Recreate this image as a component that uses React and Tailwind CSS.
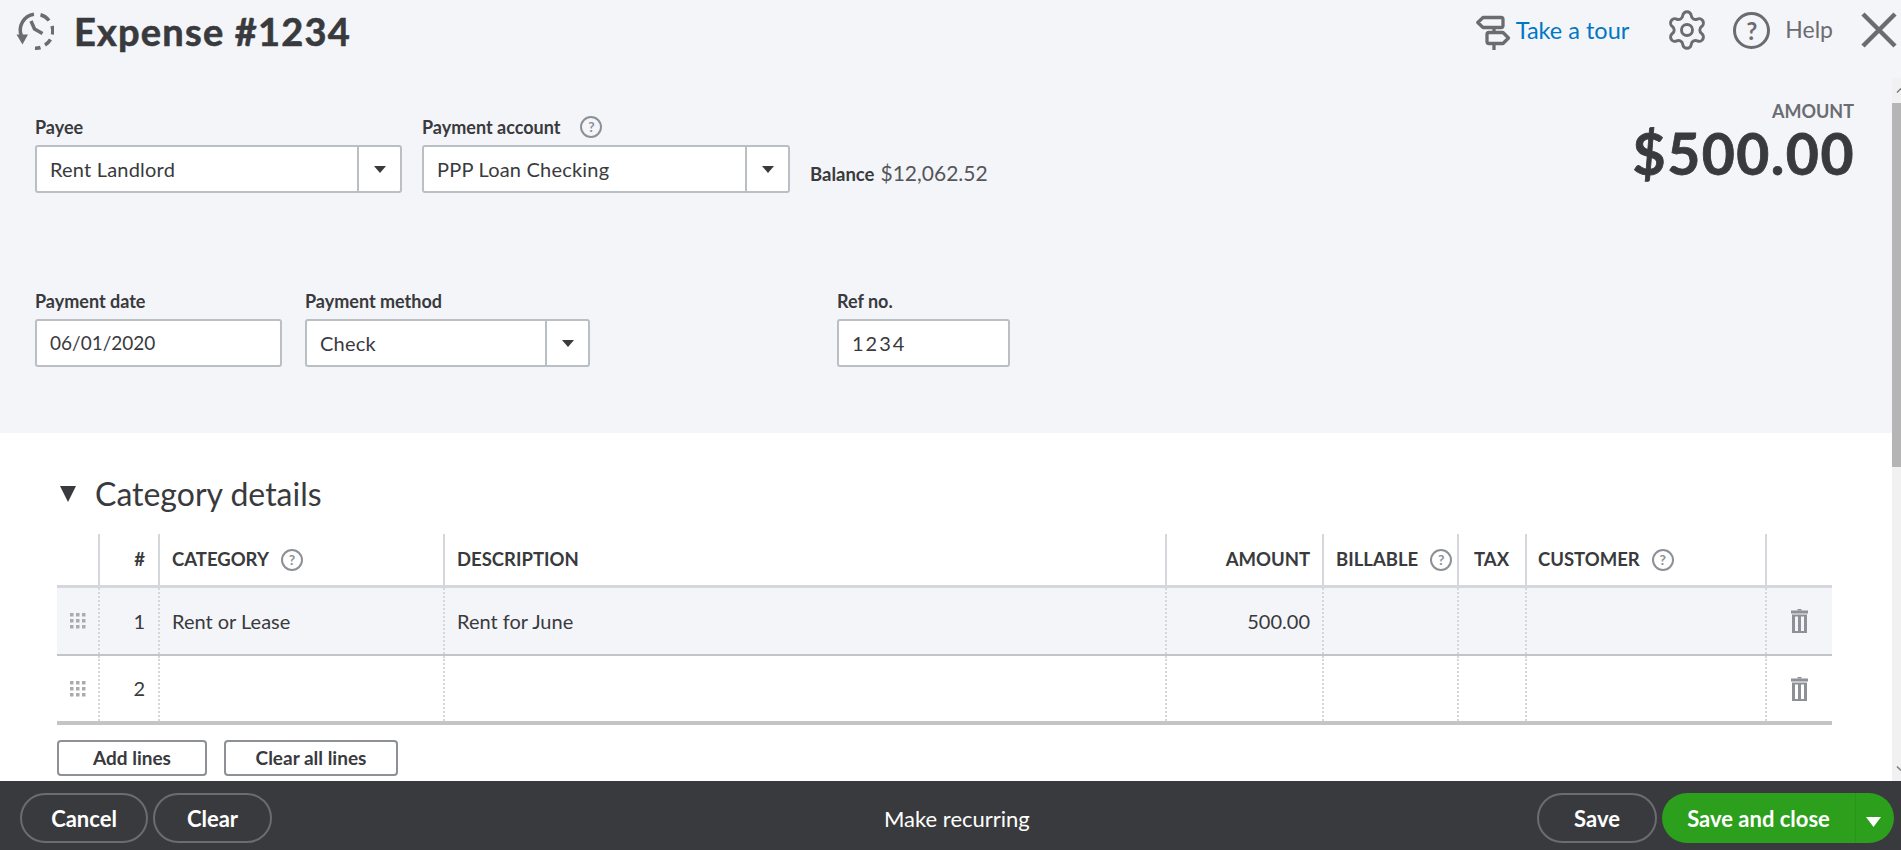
import { Settings } from 'lucide-react';

const columns = [
  { width: 'w-[43px]', border: true },
  { width: 'w-[60px]', border: true },
  { width: 'w-[285px]', border: true },
  { width: 'w-[722px]', border: true },
  { width: 'w-[157px]', border: true },
  { width: 'w-[135px]', border: true },
  { width: 'w-[68px]', border: true },
  { width: 'w-[240px]', border: true },
  { width: 'flex-1', border: false },
];

function Caret({ className = '' }) {
  return (
    <svg width="12" height="7" viewBox="0 0 12 7" className={className}>
      <path d="M0 0h12L6 7z" fill="currentColor" />
    </svg>
  );
}

function HistoryIcon() {
  return (
    <svg width="38" height="38" viewBox="0 0 38 38" fill="none" stroke="#6b6c72" strokeWidth="3.500">
      <path d="M5.500 24A15.800 15.800 0 0 1 18 2.300" />
      <path d="M24.500 2.800A16 16 0 0 1 33 8.500" />
      <path d="M36 14A17 17 0 0 1 36.500 22.500" />
      <path d="M34.500 27.500A17 17 0 0 1 29 33" />
      <path d="M24.500 35.500A17 17 0 0 1 19 36.300" />
      <path d="M15 9l3.500 8 8 4.500" strokeLinejoin="round" />
      <path d="M0.500 22.500h11.500L6.500 32.500z" fill="#6b6c72" stroke="none" />
    </svg>
  );
}

function TourIcon() {
  return (
    <svg width="35" height="36" viewBox="0 0 35 36" fill="none" stroke="#6b6c72" strokeWidth="3.300" strokeLinejoin="round">
      <path d="M7 2.500h18a2 2 0 0 1 2 2v6a2 2 0 0 1-2 2H7L1.800 7.500z" />
      <path d="M13 17.500h14l5.500 5.500-5.500 5.500H13a2 2 0 0 1-2-2v-7a2 2 0 0 1 2-2z" />
      <path d="M18 12.500v5M18 28.500v6.500" />
    </svg>
  );
}

function CloseIcon() {
  return (
    <svg width="36" height="36" viewBox="0 0 36 36" stroke="#6b6c72" strokeWidth="4.500">
      <path d="M2 2l32 32M34 2L2 34" />
    </svg>
  );
}

function HelpIcon({ big = false }) {
  return big ? (
    <span className="flex h-[37px] w-[37px] items-center justify-center rounded-full border-[3px] border-[#6b6c72] text-[24px] font-bold text-[#6b6c72]">
      ?
    </span>
  ) : (
    <span className="flex h-[22px] w-[22px] items-center justify-center rounded-full border-2 border-[#8d9096] text-[14px] font-bold text-[#8d9096]">
      ?
    </span>
  );
}

function DragDots() {
  const dots = [];
  for (let y = 1; y < 15; y += 6) {
    for (let x = 1; x < 15; x += 6) {
      dots.push(<rect key={x + '-' + y} x={x} y={y} width="3.500" height="3.500" fill="#a9abaf" />);
    }
  }
  return (
    <svg width="18" height="18" viewBox="0 0 18 18">
      {dots}
    </svg>
  );
}

function TrashIcon() {
  return (
    <svg width="17" height="24" viewBox="0 0 17 24" fill="#8d9096">
      <rect x="6.500" y="0" width="4" height="1.500" />
      <rect x="0" y="1.500" width="17" height="3" />
      <path d="M1 5.500h15V24H1zM4 7.500V22h3V7.500zM10 7.500V22h3V7.500z" fillRule="evenodd" />
    </svg>
  );
}

function Select({ value, width, arrowWidth }) {
  return (
    <div className={`flex h-12 items-stretch rounded-[3px] border-2 border-[#babec5] bg-white ${width}`}>
      <span className="flex flex-1 items-center pb-[1px] pl-[13px] text-[20px] tracking-[0.01em] text-[#393a3d]">{value}</span>
      <span className={`flex items-center justify-center border-l-2 border-[#babec5] text-[#393a3d] ${arrowWidth}`}>
        <Caret />
      </span>
    </div>
  );
}

function TextInput({ value, width, textClass }) {
  return (
    <div className={`flex h-12 items-center rounded-[3px] border-2 border-[#babec5] bg-white pl-[13px] text-[#393a3d] ${textClass} ${width}`}>
      {value}
    </div>
  );
}

function Label({ children }) {
  return <div className="mb-2 flex h-5 items-center text-[18px] leading-5 font-bold text-[#393a3d]">{children}</div>;
}

function Cell({ col, children, className = '', dotted }) {
  const line = col.border ? (dotted ? 'border-r-2 border-dotted border-[#d4d7dc]' : 'border-r-2 border-[#d4d7dc]') : '';
  return <div className={`flex h-full items-center ${col.width} ${line} ${className}`}>{children}</div>;
}

function HeadLabel({ children, help }) {
  return (
    <>
      <span className="text-[18.500px] font-bold text-[#393a3d]">{children}</span>
      {help && <span className="ml-[12px]"><HelpIcon /></span>}
    </>
  );
}

function Row({ n, category, description, amount, shaded, last }) {
  return (
    <div className={`flex ${last ? 'h-[69px] border-b-4' : 'h-[68px] border-b-2'} border-[#c4c4c4] ${shaded ? 'bg-[#f4f5f8]' : 'bg-white'} text-[20px] text-[#393a3d]`}>
      <Cell col={columns[0]} dotted className="justify-center"><DragDots /></Cell>
      <Cell col={columns[1]} dotted className="justify-end pr-[13px] pb-[1px]">{n}</Cell>
      <Cell col={columns[2]} dotted className="pb-[1px] pl-[12px]">{category}</Cell>
      <Cell col={columns[3]} dotted className="pb-[1px] pl-[12px]">{description}</Cell>
      <Cell col={columns[4]} dotted className="justify-end pr-[12px] pb-[1px]">{amount}</Cell>
      <Cell col={columns[5]} dotted />
      <Cell col={columns[6]} dotted />
      <Cell col={columns[7]} dotted />
      <Cell col={columns[8]} className="justify-center"><TrashIcon /></Cell>
    </div>
  );
}

function PillButton({ children, className = '' }) {
  return (
    <button className={`flex h-[50px] items-center justify-center rounded-full border-2 border-[#6b6c72] text-[22px] font-bold text-white ${className}`}>
      {children}
    </button>
  );
}

export default function App() {
  return (
    <div className="flex h-[850px] w-[1901px] flex-col overflow-hidden bg-white font-[Lato,sans-serif]">
      <header className="flex h-[78px] shrink-0 items-start bg-[#f4f5f8] pt-3">
        <div className="ml-4"><HistoryIcon /></div>
        <h1 className="ml-[20px] text-[38px] leading-[38px] font-bold tracking-[1.200px] text-[#393a3d] [-webkit-text-stroke:0.6px_#393a3d]">Expense #1234</h1>
        <div className="ml-auto flex items-start">
          <div className="mt-[3px]"><TourIcon /></div>
          <a className="mt-[1px] ml-[5px] text-[23.500px] text-[#0077c5]">Take a tour</a>
          <Settings size={44} strokeWidth={1.6} color="#6b6c72" className="mt-[-4px] ml-[36px]" />
          <div className="ml-[24px]"><HelpIcon big /></div>
          <span className="ml-[15px] text-[23px] text-[#6b6c72]">Help</span>
          <div className="mr-[4px] ml-[28px]"><CloseIcon /></div>
        </div>
      </header>

      <div className="flex min-h-0 flex-1">
        <main className="flex min-w-0 flex-1 flex-col">
          <section className="flex h-[355px] shrink-0 flex-col bg-[#f4f5f8] pl-[35px]">
            <div className="flex pt-[39px]">
              <div className="flex-1">
                <div className="flex items-start">
                  <div>
                    <Label>Payee</Label>
                    <Select value="Rent Landlord" width="w-[367px]" arrowWidth="w-[43px]" />
                  </div>
                  <div className="ml-5">
                    <Label>
                      Payment account
                      <span className="ml-[20px] inline-flex"><HelpIcon /></span>
                    </Label>
                    <Select value="PPP Loan Checking" width="w-[368px]" arrowWidth="w-[43px]" />
                  </div>
                  <div className="mt-[40px] ml-5 flex items-baseline gap-[6px]">
                    <span className="text-[18.500px] font-bold text-[#393a3d]">Balance</span>
                    <span className="text-[21px] text-[#55565b]">$12,062.52</span>
                  </div>
                </div>
              </div>
              <div className="mt-[-18px] mr-[37px] text-right">
                <div className="mr-[1px] text-[18px] leading-[24px] font-bold text-[#6b6c72]">AMOUNT</div>
                <div className="text-[57px] leading-[60px] font-bold tracking-[1.500px] text-[#393a3d] [-webkit-text-stroke:0.8px_#393a3d]">$500.00</div>
              </div>
            </div>
            <div className="mt-[98px] flex">
              <div>
                <Label>Payment date</Label>
                <TextInput value="06/01/2020" width="w-[247px]" textClass="text-[19px]" />
              </div>
              <div className="ml-[23px]">
                <Label>Payment method</Label>
                <Select value="Check" width="w-[285px]" arrowWidth="w-[43px]" />
              </div>
              <div className="ml-[247px]">
                <Label>Ref no.</Label>
                <TextInput value="1234" width="w-[173px]" textClass="text-[20px] tracking-[2px]" />
              </div>
            </div>
          </section>

          <section className="flex-1 pr-[60px] pl-[57px]">
            <div className="flex h-[101px] items-center pt-[20px] text-[#393a3d]">
              <svg width="16" height="16" viewBox="0 0 16 16" className="ml-[3px]">
                <path d="M0 0h16L8 16z" fill="currentColor" />
              </svg>
              <h2 className="ml-[19px] text-[32px] font-normal">Category details</h2>
            </div>
            <div className="flex h-[54px] border-b-[3px] border-[#d4d7dc]">
              <Cell col={columns[0]} />
              <Cell col={columns[1]} className="justify-end pr-[13px]"><HeadLabel>#</HeadLabel></Cell>
              <Cell col={columns[2]} className="pl-[12px]"><HeadLabel help>CATEGORY</HeadLabel></Cell>
              <Cell col={columns[3]} className="pl-[12px]"><HeadLabel>DESCRIPTION</HeadLabel></Cell>
              <Cell col={columns[4]} className="justify-end pr-[12px]"><HeadLabel>AMOUNT</HeadLabel></Cell>
              <Cell col={columns[5]} className="pl-[12px]"><HeadLabel help>BILLABLE</HeadLabel></Cell>
              <Cell col={columns[6]} className="pl-[15px]"><HeadLabel>TAX</HeadLabel></Cell>
              <Cell col={columns[7]} className="pl-[11px]"><HeadLabel help>CUSTOMER</HeadLabel></Cell>
              <Cell col={columns[8]} />
            </div>
            <Row n="1" category="Rent or Lease" description="Rent for June" amount="500.00" shaded />
            <Row n="2" last />
            <div className="mt-[15px] flex gap-[17px]">
              <button className="h-9 w-[150px] rounded-[4px] border-2 border-[#8d9096] text-[19px] font-bold text-[#393a3d]">Add lines</button>
              <button className="h-9 w-[174px] rounded-[4px] border-2 border-[#8d9096] text-[19px] font-bold text-[#393a3d]">Clear all lines</button>
            </div>
          </section>
        </main>

        <div className="flex w-[9px] shrink-0 flex-col bg-[#f1f1f1]">
          <div className="h-[25px] pt-[9px]">
            <svg width="9" height="7" viewBox="0 0 9 7" fill="none" stroke="#7a7a7a" strokeWidth="1.500"><path d="M5 5.500L9 1.500" /></svg>
          </div>
          <div className="h-[364px] bg-[#b5b5b5]" />
          <div className="mt-auto h-[16px]">
            <svg width="9" height="7" viewBox="0 0 9 7" fill="none" stroke="#7a7a7a" strokeWidth="1.500"><path d="M5 1.500L9 5.500" /></svg>
          </div>
        </div>
      </div>

      <footer className="flex h-[69px] shrink-0 items-start bg-[#393a3d] pt-3 pl-5">
        <PillButton className="w-[128px]">Cancel</PillButton>
        <PillButton className="ml-[5px] w-[119px]">Clear</PillButton>
        <span className="ml-[612px] flex h-[50px] items-center text-[22px] text-white">Make recurring</span>
        <PillButton className="ml-auto w-[120px]">Save</PillButton>
        <div className="mr-[7px] ml-[5px] flex h-[50px] w-[232px] items-center rounded-full bg-[#2ca01c] text-white">
          <span className="flex h-full flex-1 items-center justify-center border-r border-[#299518] text-[22px] font-bold">Save and close</span>
          <span className="flex w-[38px] items-center justify-center pt-[8px] pr-[4px]">
            <svg width="15" height="10" viewBox="0 0 15 10"><path d="M0 0h15L7.500 10z" fill="currentColor" /></svg>
          </span>
        </div>
      </footer>
    </div>
  );
}
